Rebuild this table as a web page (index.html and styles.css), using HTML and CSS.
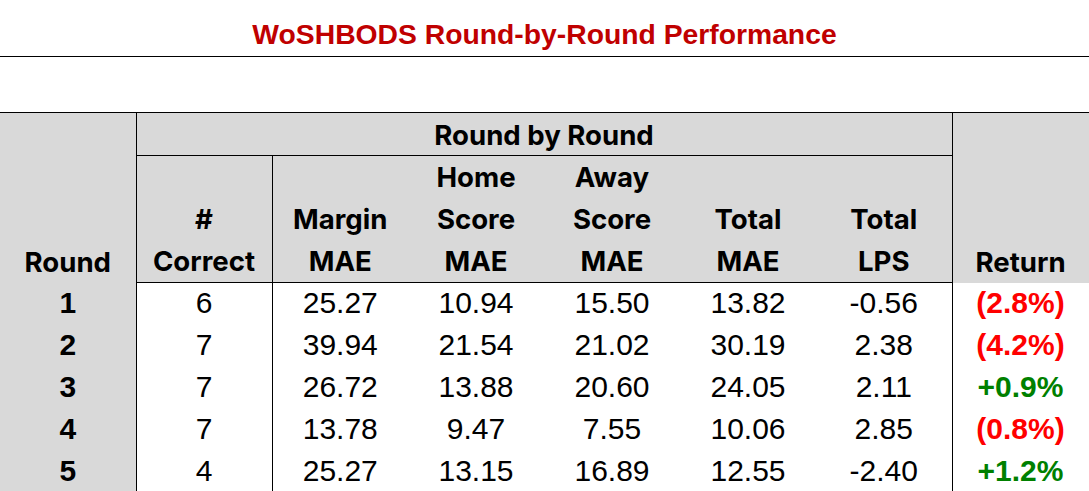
FILE: index.html
```html
<!DOCTYPE html>
<html>
<head>
<meta charset="utf-8">
<link rel="stylesheet" href="styles.css">
</head>
<body>
<div class="title">WoSHBODS Round-by-Round Performance</div>
<div class="spacer"></div>
<table class="perf">
  <colgroup>
    <col class="c"><col class="c"><col class="c"><col class="c"><col class="c"><col class="c"><col class="c"><col class="c-last">
  </colgroup>
  <thead>
    <tr>
      <th class="h-round sep-r" rowspan="2">Round</th>
      <th class="h-group" colspan="6">Round by Round</th>
      <th class="h-return sep-l" rowspan="2">Return</th>
    </tr>
    <tr>
      <th class="sep-r">#<br>Correct</th>
      <th>Margin<br>MAE</th>
      <th>Home<br>Score<br>MAE</th>
      <th>Away<br>Score<br>MAE</th>
      <th>Total<br>MAE</th>
      <th>Total<br>LPS</th>
    </tr>
  </thead>
  <tbody>
    <tr><td class="rnd sep-r">1</td><td class="sep-r">6</td><td>25.27</td><td>10.94</td><td>15.50</td><td>13.82</td><td>-0.56</td><td class="ret neg sep-l">(2.8%)</td></tr>
    <tr><td class="rnd sep-r">2</td><td class="sep-r">7</td><td>39.94</td><td>21.54</td><td>21.02</td><td>30.19</td><td>2.38</td><td class="ret neg sep-l">(4.2%)</td></tr>
    <tr><td class="rnd sep-r">3</td><td class="sep-r">7</td><td>26.72</td><td>13.88</td><td>20.60</td><td>24.05</td><td>2.11</td><td class="ret pos sep-l">+0.9%</td></tr>
    <tr><td class="rnd sep-r">4</td><td class="sep-r">7</td><td>13.78</td><td>9.47</td><td>7.55</td><td>10.06</td><td>2.85</td><td class="ret neg sep-l">(0.8%)</td></tr>
    <tr><td class="rnd sep-r">5</td><td class="sep-r">4</td><td>25.27</td><td>13.15</td><td>16.89</td><td>12.55</td><td>-2.40</td><td class="ret pos sep-l">+1.2%</td></tr>
  </tbody>
</table>
</body>
</html>
```

FILE: styles.css
```css
html, body {
  margin: 0;
  padding: 0;
  background: #ffffff;
}

.title {
  font-family: "Liberation Sans", Arial, sans-serif;
  font-weight: bold;
  font-size: 28.3px;
  line-height: 32px;
  color: #c00000;
  text-align: center;
  padding-top: 18px;
  height: 38px;
  border-bottom: 1px solid #000;
}

.spacer {
  height: 55px;
}

.perf {
  border-collapse: collapse;
  table-layout: fixed;
  width: 1089px;
}

.perf col.c {
  width: 136px;
}

.perf col.c-last {
  width: 137px;
}

.perf th,
.perf td {
  padding: 0;
  text-align: center;
  line-height: 42px;
  white-space: nowrap;
}

.perf th {
  background: #d9d9d9;
  font-family: Inter, "Noto Sans", sans-serif;
  font-weight: 700;
  font-size: 27.6px;
  color: #000;
  vertical-align: bottom;
}

.perf thead tr:first-child th {
  border-top: 1px solid #000;
}

.perf thead tr:last-child th {
  border-bottom: 1px solid #000;
}

.perf .h-group {
  border-bottom: 1px solid #000;
  vertical-align: middle;
  line-height: 38px;
  padding-top: 3px;
  padding-bottom: 1px;
}

.perf .h-return {
  border-right: 1px solid #000;
}

.perf td {
  font-family: "Liberation Sans", Arial, sans-serif;
  font-size: 30px;
  color: #000;
  line-height: 40px;
  padding-bottom: 2px;
}

.perf td:last-child {
  border-right: 1px solid #000;
}

.perf .rnd {
  background: #d9d9d9;
  font-weight: bold;
}

.perf .sep-r {
  border-right: 1px solid #000;
}

.perf .sep-l {
  border-left: 1px solid #000;
}

.perf .ret {
  font-weight: bold;
}

.perf .neg {
  color: #ff0000;
}

.perf .pos {
  color: #008000;
}
```
